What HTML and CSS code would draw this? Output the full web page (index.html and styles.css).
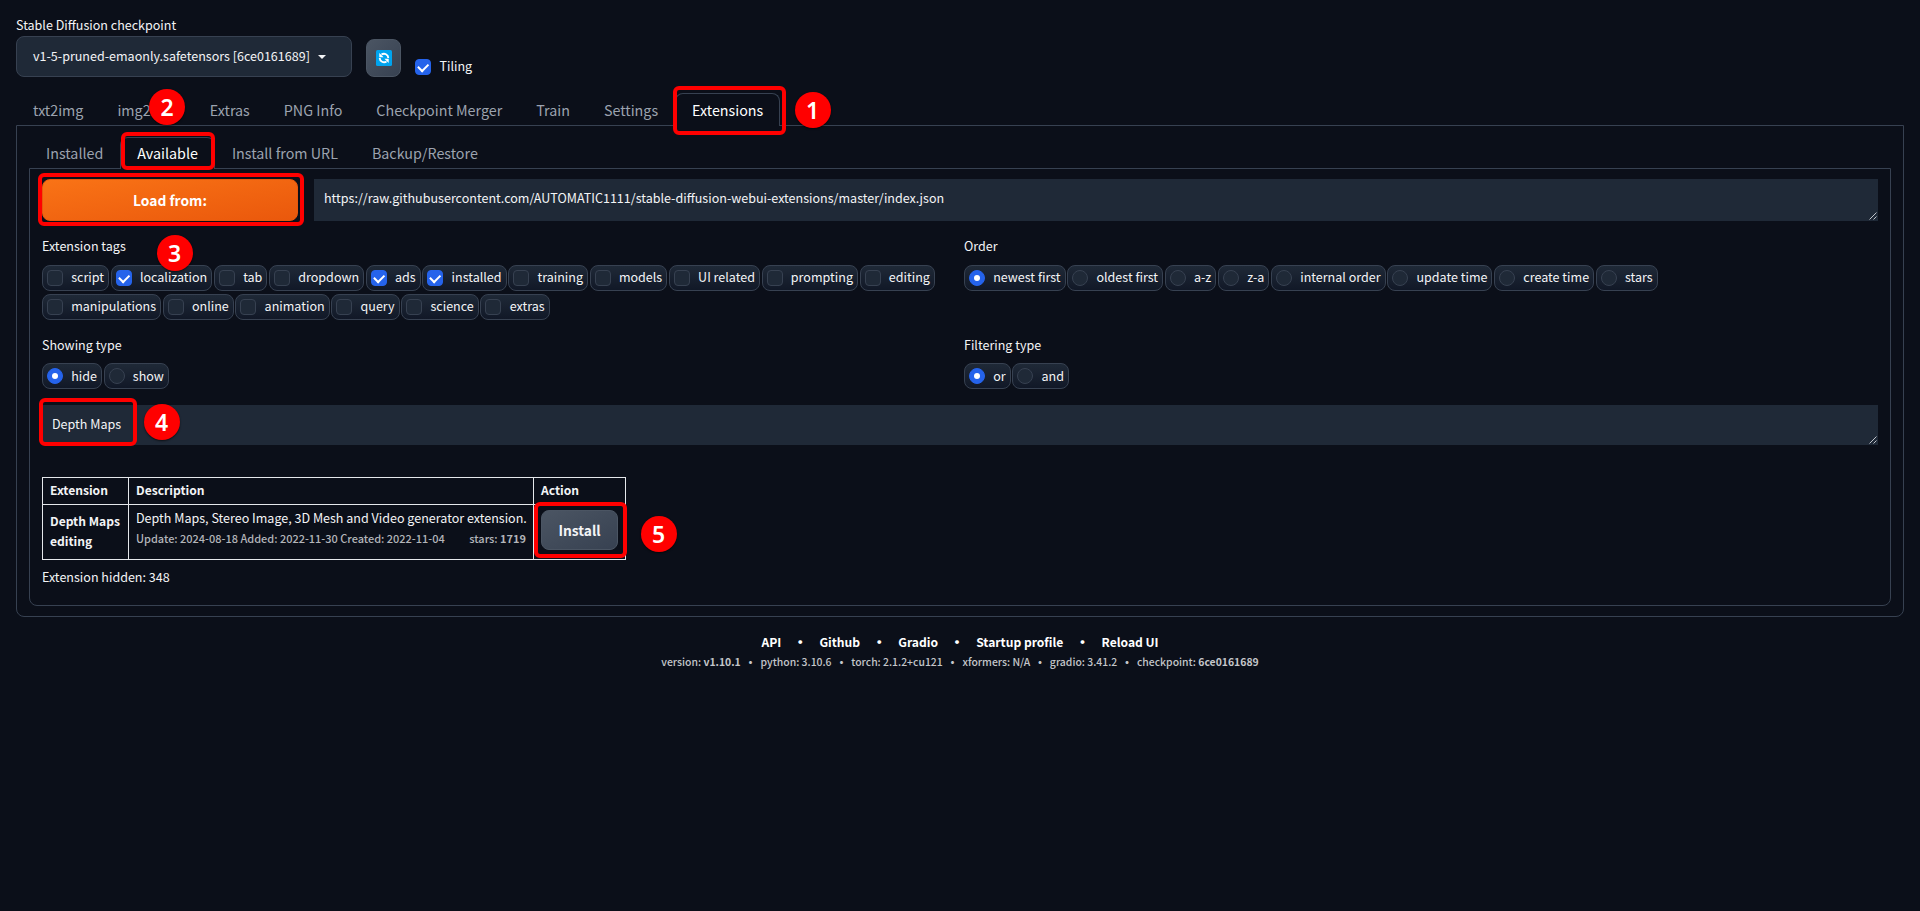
FILE: index.html
```html
<!DOCTYPE html>
<html lang="en">
<head>
<meta charset="utf-8">
<title>Stable Diffusion</title>
<link rel="stylesheet" href="styles.css">
</head>
<body>
<div class="app">
  <header class="quick">
    <div class="model">
      <div class="caption">Stable Diffusion checkpoint</div>
      <div class="select"><span>v1-5-pruned-emaonly.safetensors [6ce0161689]</span><i class="caret"></i></div>
    </div>
    <button class="refresh" aria-label="Refresh">
      <svg width="16" height="16" viewBox="0 0 16 16"><rect width="16" height="16" rx="1.5" fill="#00a4ef"/><g fill="none" stroke="#fff" stroke-width="1.9"><path d="M12.300 8A4.300 4.300 0 0 0 5.500 4.600M3.700 8A4.300 4.300 0 0 0 10.500 11.400"/></g><path d="M3.300 3v4.300h4.300zM12.700 13V8.700H8.400z" fill="#fff"/></svg>
    </button>
    <label class="tiling"><i class="box on"></i><span>Tiling</span></label>
  </header>

  <nav class="tabs main-tabs">
    <a>txt2img</a><a>img2img</a><a>Extras</a><a>PNG Info</a><a>Checkpoint Merger</a><a>Train</a><a>Settings</a><a class="active">Extensions</a>
  </nav>

  <main class="panel outer">
    <nav class="tabs sub-tabs">
      <a>Installed</a><a class="active">Available</a><a>Install from URL</a><a>Backup/Restore</a>
    </nav>
    <section class="panel inner">
      <div class="load-row">
        <button class="primary">Load from:</button>
        <div class="field url">https://raw.githubusercontent.com/AUTOMATIC1111/stable-diffusion-webui-extensions/master/index.json<svg class="grip" width="8" height="8" viewBox="0 0 8 8"><path d="M0.500 7.500l7-7M4.500 7.500l3-3"/></svg></div>
      </div>

      <div class="options tags-row">
        <fieldset>
          <legend>Extension tags</legend>
          <div class="chips">
            <label><i class="box"></i><span>script</span></label><label><i class="box on"></i><span>localization</span></label><label><i class="box"></i><span>tab</span></label><label><i class="box"></i><span>dropdown</span></label><label><i class="box on"></i><span>ads</span></label><label><i class="box on"></i><span>installed</span></label><label><i class="box"></i><span>training</span></label><label><i class="box"></i><span>models</span></label><label><i class="box"></i><span>UI related</span></label><label><i class="box"></i><span>prompting</span></label><label><i class="box"></i><span>editing</span></label><label><i class="box"></i><span>manipulations</span></label><label><i class="box"></i><span>online</span></label><label><i class="box"></i><span>animation</span></label><label><i class="box"></i><span>query</span></label><label><i class="box"></i><span>science</span></label><label><i class="box"></i><span>extras</span></label>
          </div>
        </fieldset>
        <fieldset>
          <legend>Order</legend>
          <div class="chips">
            <label><i class="dot on"></i><span>newest first</span></label><label><i class="dot"></i><span>oldest first</span></label><label><i class="dot"></i><span>a-z</span></label><label><i class="dot"></i><span>z-a</span></label><label><i class="dot"></i><span>internal order</span></label><label><i class="dot"></i><span>update time</span></label><label><i class="dot"></i><span>create time</span></label><label><i class="dot"></i><span>stars</span></label>
          </div>
        </fieldset>
      </div>

      <div class="options type-row">
        <fieldset>
          <legend>Showing type</legend>
          <div class="chips"><label><i class="dot on"></i>hide</label><label><i class="dot"></i>show</label></div>
        </fieldset>
        <fieldset>
          <legend>Filtering type</legend>
          <div class="chips"><label><i class="dot on"></i>or</label><label><i class="dot"></i>and</label></div>
        </fieldset>
      </div>

      <div class="field search">Depth Maps<svg class="grip" width="8" height="8" viewBox="0 0 8 8"><path d="M0.500 7.500l7-7M4.500 7.500l3-3"/></svg></div>

      <table class="ext">
        <colgroup><col class="c1"><col class="c2"><col class="c3"></colgroup>
        <tr class="head"><th>Extension</th><th>Description</th><th>Action</th></tr>
        <tr class="row">
          <td class="name">Depth Maps<br>editing</td>
          <td class="desc">
            <div>Depth Maps, Stereo Image, 3D Mesh and Video generator extension.</div>
            <div class="info"><span>Update: 2024-08-18 Added: 2022-11-30 Created: 2022-11-04</span><span>stars: <b>1719</b></span></div>
          </td>
          <td class="act"><button class="secondary">Install</button></td>
        </tr>
      </table>
      <p class="hidden-count">Extension hidden: 348</p>
    </section>
  </main>

  <footer>
    <div class="links"><a>API</a><i>•</i><a>Github</a><i>•</i><a>Gradio</a><i>•</i><a>Startup profile</a><i>•</i><a>Reload UI</a></div>
    <div class="versions"><span>version: <b>v1.10.1</b></span><i>•</i><span>python: 3.10.6</span><i>•</i><span>torch: 2.1.2+cu121</span><i>•</i><span>xformers: N/A</span><i>•</i><span>gradio: 3.41.2</span><i>•</i><span>checkpoint: <b>6ce0161689</b></span></div>
  </footer>

  <div class="mark m1"></div><div class="mark m2"></div><div class="mark m3"></div><div class="mark m4"></div><div class="mark m5"></div>
  <div class="step s1">1</div><div class="step s2">2</div><div class="step s3">3</div><div class="step s4">4</div><div class="step s5">5</div>
</div>
</body>
</html>
```
FILE: styles.css
```css
* { box-sizing: border-box; }
body {
  margin: 0;
  background: #0b0f19;
  color: #f3f4f6;
  font: 400 12.54px/20px "Noto Sans CJK SC", "Noto Sans", sans-serif;
}
i { font-style: normal; }
button { font-family: inherit; margin: 0; padding: 0; }
.app { position: relative; height: 911px; padding: 0 16px; overflow: hidden; }

/* top controls */
.quick { display: flex; height: 93px; padding-top: 15px; }
.model { width: 336px; margin-right: 14px; }
.caption { height: 21px; }
.select {
  display: flex; align-items: center; height: 41px; padding: 0 16px 2px;
  border: 1px solid #374151; border-radius: 8px; background: #1f2937;
}
.caret { margin: 2px 0 0 8px; border: 4px solid transparent; border-top-color: #f3f4f6; border-bottom: 0; }
.refresh {
  display: flex; align-items: center; justify-content: center;
  width: 35px; height: 38px; margin: 24px 14px 0 0;
  border: 1px solid #4b5563; border-radius: 8px;
  background: linear-gradient(to bottom right, #4b5563, #374151);
}
.tiling { display: flex; align-items: center; gap: 8.500px; height: 20px; margin-top: 42px; }
.tiling span { padding-bottom: 2px; }

.box, .dot { flex: none; display: flex; width: 16px; height: 16px; border: 1px solid #374151; background: #1f2937; }
.box { border-radius: 4px; }
.dot { border-radius: 50%; }
.box.on, .dot.on { align-items: center; justify-content: center; border-color: #2563eb; background: #2563eb; }
.box.on::after { content: ""; width: 8px; height: 4.5px; margin-top: -2px; border: solid #fff; border-width: 0 0 2px 2px; transform: rotate(-45deg); }
.dot.on::after { content: ""; width: 6px; height: 6px; border-radius: 50%; background: #fff; }

/* tabs */
.tabs { display: flex; font-size: 14.31px; color: #9ca3af; }
.tabs a { flex: none; height: 33px; padding: 0 16px; line-height: 32px; border: 1px solid transparent; border-bottom: 0; border-radius: 8px 8px 0 0; }
.tabs .active { position: relative; color: #fff; border-color: #374151; background: #0b0f19; }
.main-tabs { height: 32px; }
.sub-tabs { height: 31px; }
.sub-tabs a { height: 32px; line-height: 30px; }
.panel { border: 1px solid #374151; border-radius: 0 0 8px 8px; }
.outer { height: 492px; padding: 11px 12px 0; }
.inner { height: 438px; padding: 10px 12px 0; }

.load-row { display: flex; justify-content: space-between; height: 42px; }
.primary {
  width: 256px; height: 42px; border: 1px solid #ea580c; border-radius: 8px; color: #fff;
  background: linear-gradient(to bottom right, #f97316, #ea580c);
  font-size: 13.8px; font-weight: 700; line-height: 20px;
}
.field { position: relative; background: #1f2937; }
.url { width: 1564px; padding: 9px 10px; }
.search { height: 40px; padding: 9px 10px; }
.grip { position: absolute; right: 1px; bottom: 1px; fill: none; stroke: #d1d5db; stroke-width: .9; }

/* option groups */
.options { display: grid; grid-template-columns: 908px 1fr; column-gap: 14px; }
fieldset { min-width: 0; margin: 0; padding: 0; border: 0; }
legend { height: 29px; padding: 0; }
.tags-row { height: 99px; margin-top: 15px; }
.type-row { height: 70px; }
.type-row legend { height: 28px; }
.chips { display: flex; flex-wrap: wrap; gap: 3px 1.700px; }
.chips label {
  display: flex; align-items: center; gap: 8.200px; height: 26px; padding: 0 4px;
  border: 1px solid #374151; border-radius: 8px; line-height: 18px;
  background: linear-gradient(#1f2937, #111827);
}
.chips span { padding-bottom: 2px; }

/* results */
.ext { width: 583px; margin-top: 32px; border-collapse: collapse; table-layout: fixed; }
.c1 { width: 86px; }
.c2 { width: 405px; }
.c3 { width: 92px; }
.ext th, .ext td { padding: 0 7px; border: 1px solid #e5e7eb; text-align: left; vertical-align: top; white-space: nowrap; }
.ext th { height: 27px; padding-top: 2px; font-size: 12.1px; }
.row { height: 55px; }
.ext .name { padding-top: 6px; font-size: 12.1px; font-weight: 700; }
.ext .desc { padding-top: 3px; }
.info { display: flex; justify-content: space-between; font-size: 10.98px; font-weight: 500; color: #b3b5b9; }
.ext .act { padding-top: 5px; }
.secondary {
  display: block; width: 77px; height: 40px; border: 1px solid #4b5563; border-radius: 8px; color: #f3f4f6;
  background: linear-gradient(to bottom right, #4b5563, #374151);
  font-size: 13.8px; font-weight: 700; line-height: 20px;
}
.hidden-count { margin: 7px 0 0; }

footer { margin-top: 15px; text-align: center; }
.links, .versions { display: flex; justify-content: center; }
.links { font-size: 12.1px; font-weight: 700; color: #fff; }
.links i { width: 38.2px; font-size: 15px; }
.versions { font-size: 10.43px; font-weight: 500; color: #c4c6ca; }
.versions i { width: 19.7px; font-size: 13px; }

/* walkthrough annotations */
.mark { position: absolute; border: 4px solid #f00; border-radius: 6px; }
.m1 { left: 673px; top: 86px; width: 113px; height: 49px; }
.m2 { left: 121px; top: 132px; width: 94px; height: 38px; }
.m3 { left: 38px; top: 173px; width: 266px; height: 53px; }
.m4 { left: 39px; top: 398px; width: 98px; height: 48px; }
.m5 { left: 534px; top: 502px; width: 93px; height: 56px; }
.step {
  position: absolute; width: 36px; height: 36px; border-radius: 50%;
  background: #f00; color: #fff; text-align: center;
  font: 600 23px/36px "Noto Sans", sans-serif; box-shadow: 0 1px 2px rgba(0, 0, 0, .6);
}
.s1 { left: 794.5px; top: 92px; }
.s2 { left: 149px; top: 89px; }
.s3 { left: 156.5px; top: 235px; }
.s4 { left: 143.5px; top: 404px; }
.s5 { left: 640.5px; top: 516px; }
```
